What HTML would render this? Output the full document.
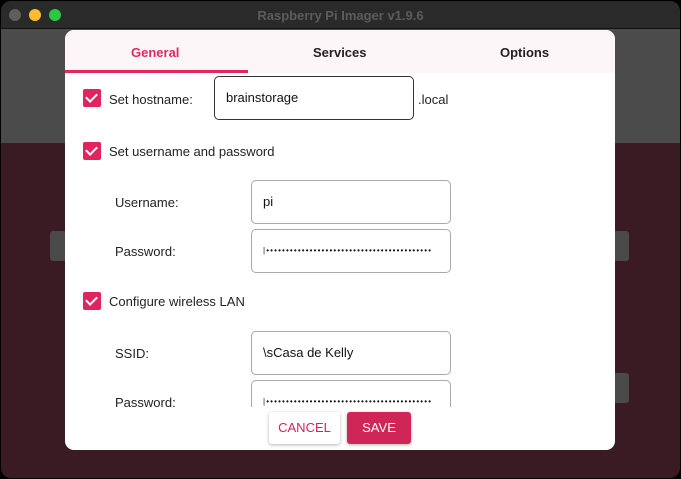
<!DOCTYPE html>
<html><head><style>
*{margin:0;padding:0;box-sizing:border-box}
body{width:681px;height:479px;background:#000;font-family:"Liberation Sans",sans-serif;position:relative;overflow:hidden}
.win{position:absolute;left:1px;top:1px;width:679px;height:477px;border-radius:10px;overflow:hidden;background:#3a1b23}
.tb{position:absolute;left:0;top:0;width:100%;height:28px;background:#2b2a2a;border-bottom:1px solid #111}
.tb .t{position:absolute;left:0;right:0;top:7px;text-align:center;color:#5c5c5c;font-weight:bold;font-size:13px}
.d{position:absolute;top:8px;width:12px;height:12px;border-radius:50%}
.gray{position:absolute;left:0;top:28px;width:100%;height:114px;background:#4b4b4b}
.wg{position:absolute;background:#4a4a4a;border-radius:3px}
.dlg{position:absolute;left:65px;top:30px;width:550px;height:420px;background:#fff;border-radius:9px;overflow:hidden}
.tabs{height:43px;background:#fdf6f9;position:relative;font-size:13px;font-weight:bold;color:#222}
.tabs span{position:absolute;top:15px}
.ul{position:absolute;left:0;top:40px;width:183px;height:3px;background:#e2275f}
.cb{position:absolute;width:18px;height:18px;background:#e2245e;border-radius:2px}
.cb:after{content:"";position:absolute;left:5px;top:2px;width:5px;height:9px;border:solid #fff;border-width:0 2.5px 2.5px 0;transform:rotate(45deg)}
.lb{position:absolute;font-size:13px;color:#222}
.in{position:absolute;border:1px solid #aaa;border-radius:5px;background:#fff;font-size:13px;color:#111;padding-left:11px;line-height:42px}
.dots{font-size:8px;letter-spacing:1.15px;line-height:42px;overflow:hidden;white-space:nowrap}
.btn{position:absolute;top:382px;height:32px;border-radius:3px;font-size:13px;text-align:center;line-height:32px;box-shadow:0 1px 3px rgba(0,0,0,.3)}
</style></head><body>
<div class="win">
<div class="tb"><div class="d" style="left:8px;background:#5e5e5e"></div><div class="d" style="left:28px;background:#febc2e"></div><div class="d" style="left:48px;background:#28c840"></div><div class="t">Raspberry Pi Imager v1.9.6</div></div>
<div class="gray"></div>
<div class="wg" style="left:49px;top:230px;width:20px;height:30px"></div>
<div class="wg" style="left:610px;top:230px;width:18px;height:30px"></div>
<div class="wg" style="left:610px;top:372px;width:18px;height:30px"></div>
</div>
<div class="dlg">
<div class="tabs"><span style="left:66px;color:#e2275f">General</span><span style="left:248px">Services</span><span style="left:435px">Options</span><div class="ul"></div></div>
<div class="cb" style="left:18px;top:59px"></div><div class="lb" style="left:44px;top:62px">Set hostname:</div>
<div class="in" style="left:149px;top:46px;width:200px;height:44px;border-color:#333">brainstorage</div>
<div class="lb" style="left:353px;top:62px">.local</div>
<div class="cb" style="left:18px;top:112px"></div><div class="lb" style="left:44px;top:114px">Set username and password</div>
<div class="lb" style="left:50px;top:165px">Username:</div>
<div class="in" style="left:186px;top:150px;width:200px;height:44px">pi</div>
<div class="lb" style="left:50px;top:214px">Password:</div>
<div class="in dots" style="left:186px;top:199px;width:200px;height:44px;padding-left:11px">|••••••••••••••••••••••••••••••••••••••••••</div>
<div class="cb" style="left:18px;top:262px"></div><div class="lb" style="left:44px;top:264px">Configure wireless LAN</div>
<div class="lb" style="left:50px;top:316px">SSID:</div>
<div class="in" style="left:186px;top:301px;width:200px;height:44px">\sCasa de Kelly</div>
<div style="position:absolute;left:0;top:350px;width:550px;height:27px;overflow:hidden">
<div class="lb" style="left:50px;top:15px">Password:</div>
<div class="in dots" style="left:186px;top:0;width:200px;height:44px;padding-left:11px">|••••••••••••••••••••••••••••••••••••••••••</div>
</div>
<div class="btn" style="left:204px;width:71px;background:#fff;color:#d0245a">CANCEL</div>
<div class="btn" style="left:282px;width:64px;background:#cf2657;color:#fff">SAVE</div>
</div>
</body></html>
